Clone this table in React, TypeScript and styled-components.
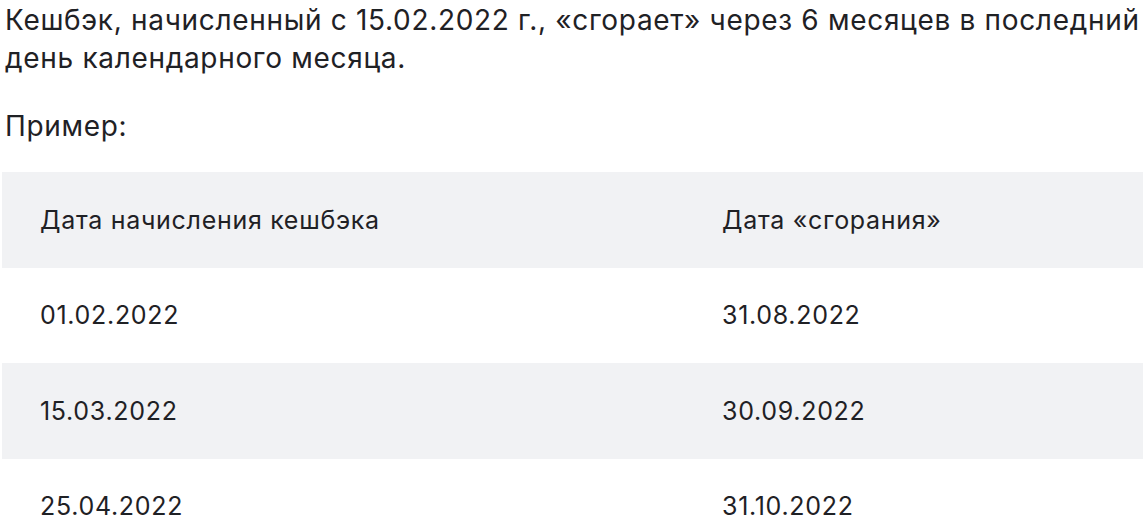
import styled, { createGlobalStyle } from 'styled-components';

const GlobalStyle = createGlobalStyle`
  body {
    margin: 0;
    background: #ffffff;
    font-family: Inter, Roboto, 'Noto Sans', sans-serif;
    color: #1f2125;
  }
`;

const Page = styled.div`
  width: 1143px;
  overflow: hidden;
`;

const Paragraph = styled.p`
  margin: 0;
  width: 1160px;
  padding: 1px 0 0 5px;
  font-size: 28px;
  line-height: 38px;
  letter-spacing: 0.68px;
`;

const Caption = styled.p`
  margin: 30px 0 0 5px;
  font-size: 28px;
  line-height: 38px;
  letter-spacing: 0.68px;
`;

const Table = styled.div`
  margin: 27px 0 0 2px;
  display: flex;
  flex-direction: column;
`;

const Row = styled.div<{ $shaded?: boolean }>`
  display: grid;
  grid-template-columns: 682px 1fr;
  height: 95.5px;
  align-items: center;
  background: ${(p) => (p.$shaded ? '#f1f2f4' : '#ffffff')};
`;

const Cell = styled.div`
  padding-left: 38px;
  font-size: 25px;
  line-height: 30px;
  letter-spacing: 0.7px;
`;

const rows = [
  ['01.02.2022', '31.08.2022'],
  ['15.03.2022', '30.09.2022'],
  ['25.04.2022', '31.10.2022'],
];

export default function App() {
  return (
    <Page>
      <GlobalStyle />
      <Paragraph>
        Кешбэк, начисленный с 15.02.2022 г., «сгорает» через 6 месяцев в последний день
        календарного месяца.
      </Paragraph>
      <Caption>Пример:</Caption>
      <Table>
        <Row $shaded>
          <Cell>Дата начисления кешбэка</Cell>
          <Cell>Дата «сгорания»</Cell>
        </Row>
        {rows.map(([from, to], i) => (
          <Row key={from} $shaded={i % 2 === 1}>
            <Cell>{from}</Cell>
            <Cell>{to}</Cell>
          </Row>
        ))}
      </Table>
    </Page>
  );
}
